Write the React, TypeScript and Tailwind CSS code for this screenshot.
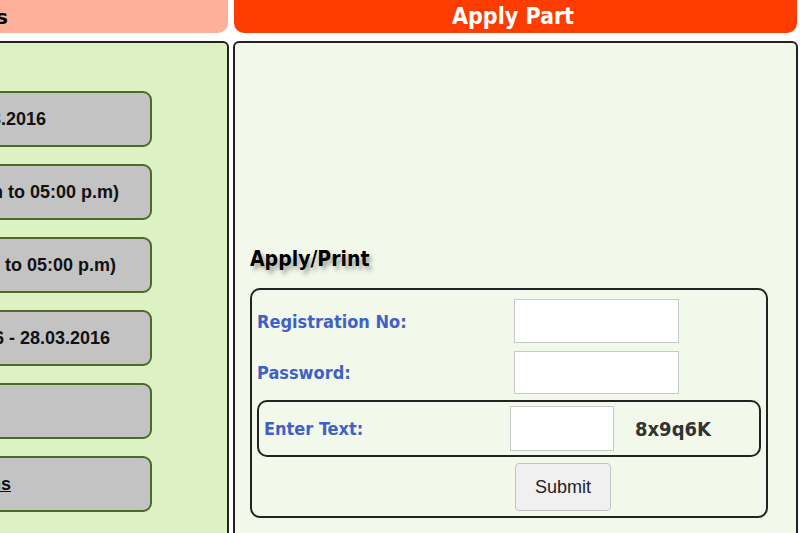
import React from 'react'

const leftItems = [
  { text: 'Date of Notification : 01.03.2016', pr: 'pr-[104px]' },
  { text: 'Online Apply (10:00 a.m to 05:00 p.m)', pr: 'pr-[31px]' },
  { text: 'Fee Payment (10:00 a.m to 05:00 p.m)', pr: 'pr-[34px]' },
  { text: 'Last Date : 10.03.2016 - 28.03.2016', pr: 'pr-[40px]' },
  { text: '', pr: 'pr-[40px]' },
  { text: 'Instructions', pr: 'pr-[139px]', link: true },
]

const label = "font-['DejaVu_Sans_Condensed','DejaVu_Sans',sans-serif] font-bold text-[18px] text-[#4060c8]"

const App = () => {
  return (
    <div className="w-[800px] h-[533px] overflow-hidden bg-white">
      <div className="flex -ml-[120px] w-[918px] gap-[4px]">
        {/* left column */}
        <div className="w-[349px] flex flex-col gap-[8px]">
          <div className="h-[33px] w-[348px] bg-[#ffb09a] rounded-b-[10px] flex items-center justify-end pr-[220px]">
            <span className="font-['DejaVu_Sans',sans-serif] font-bold text-[20px] text-black">Events</span>
          </div>
          <div className="h-[520px] bg-[#ddf2c3] border-2 border-[#222] rounded-t-[6px] pt-[48px] pl-[20px] pr-[75px] flex flex-col gap-[17px]">
            {leftItems.map((item, i) => (
              <div
                key={i}
                className={`h-[56px] bg-[#c3c3c3] border-2 border-[#4b6a2c] rounded-[9px] flex items-center justify-end whitespace-nowrap ${item.pr}`}
              >
                <span className={`font-['Liberation_Sans',Arial,sans-serif] font-bold text-[18px] text-[#111] ${item.link ? 'underline' : ''}`}>
                  {item.text}
                </span>
              </div>
            ))}
          </div>
        </div>

        {/* right column */}
        <div className="w-[565px] flex flex-col gap-[8px]">
          <div className="h-[33px] ml-[1px] w-[563px] bg-[#ff3c00] rounded-b-[10px] flex items-center justify-center">
            <span className="font-['DejaVu_Sans_Condensed','DejaVu_Sans',sans-serif] font-bold text-[23px] text-white pr-[5px]">Apply Part</span>
          </div>
          <div className="h-[520px] bg-[#f3f9ea] border-2 border-[#222] rounded-t-[6px] pt-[203px] pl-[15px] pr-[30px]">
            <h2 className="font-['DejaVu_Sans_Condensed','DejaVu_Sans',sans-serif] font-bold text-[21px] text-black leading-[26px] [text-shadow:3px_4px_4px_rgba(0,0,0,0.35)]">
              Apply/Print
            </h2>
            <div className="mt-[16px] w-[518px] border-2 border-[#222] rounded-[10px] px-[5px] pt-[9px] pb-[5px] flex flex-col">
              <div className="flex items-center h-[44px]">
                <span className={`${label} w-[257px]`}>Registration No:</span>
                <input className="w-[165px] h-[44px] bg-white border border-[#c8c8c8]" />
              </div>
              <div className="flex items-center h-[43px] mt-[8px]">
                <span className={`${label} w-[257px]`}>Password:</span>
                <input type="password" className="w-[165px] h-[43px] bg-white border border-[#c8c8c8]" />
              </div>
              <div className="mt-[6px] border-2 border-[#222] rounded-[10px] h-[57px] flex items-center pl-[5px]">
                <span className={`${label} w-[246px]`}>Enter Text:</span>
                <input className="w-[104px] h-[45px] bg-white border border-[#c8c8c8]" />
                <span className="ml-[21px] font-['DejaVu_Sans_Condensed','DejaVu_Sans',sans-serif] font-bold text-[20px] text-[#333]">8x9q6K</span>
              </div>
              <div className="mt-[6px] flex pl-[258px]">
                <button className="w-[96px] h-[48px] bg-[#f0f0f0] border border-[#c4c4c4] rounded-[4px] font-['Liberation_Sans',Arial,sans-serif] text-[18px] text-[#222]">
                  Submit
                </button>
              </div>
            </div>
          </div>
        </div>
      </div>
    </div>
  )
}

export default App
